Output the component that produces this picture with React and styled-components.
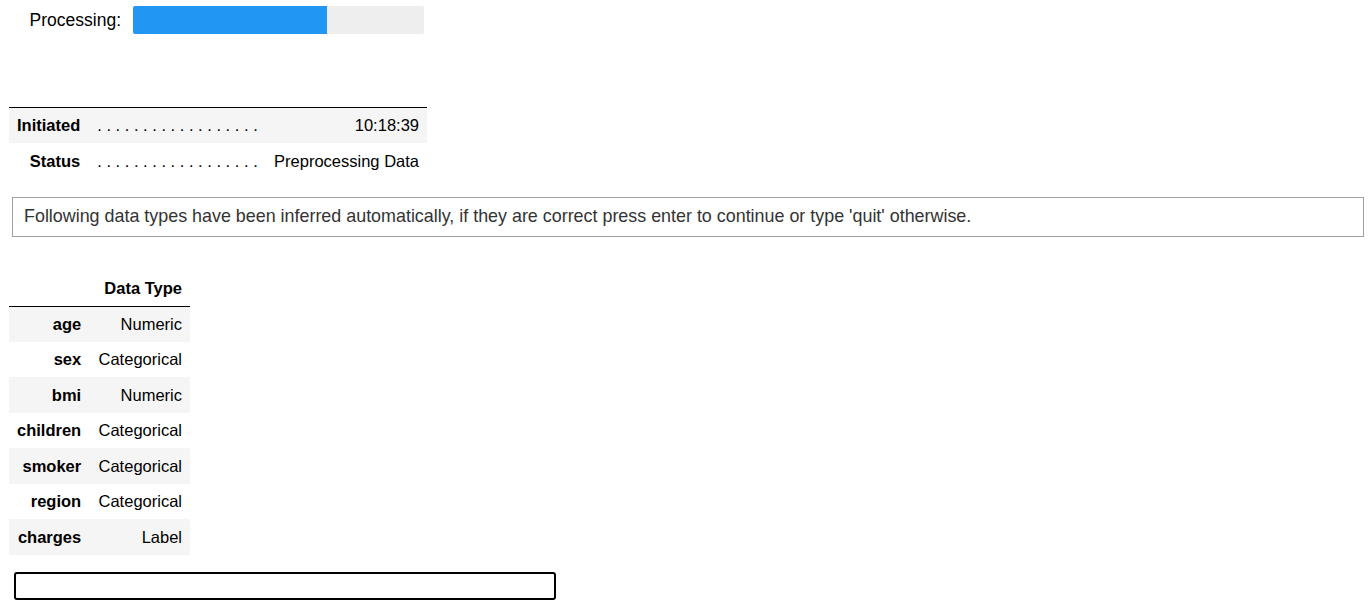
import React from 'react';
import styled, { createGlobalStyle } from 'styled-components';

const GlobalStyle = createGlobalStyle`
  body {
    margin: 0;
    background: #ffffff;
    font-family: 'Liberation Sans', Arial, sans-serif;
    color: #000000;
  }
`;

const timestamps = [
  { label: 'Initiated', value: '10:18:39' },
  { label: 'Status', value: 'Preprocessing Data' },
];

const dataTypes = [
  ['age', 'Numeric'],
  ['sex', 'Categorical'],
  ['bmi', 'Numeric'],
  ['children', 'Categorical'],
  ['smoker', 'Categorical'],
  ['region', 'Categorical'],
  ['charges', 'Label'],
];

const DOTS = '. . . . . . . . . . . . . . . . . .';

const App = () => (
  <Page>
    <GlobalStyle />
    <ProgressRow>
      <ProgressLabel>Processing:</ProgressLabel>
      <ProgressTrack>
        <ProgressFill style={{ width: `${(194 / 291) * 100}%` }} />
      </ProgressTrack>
    </ProgressRow>

    <InfoTable>
      <tbody>
        {timestamps.map((t) => (
          <tr key={t.label}>
            <th>{t.label}</th>
            <DotsCell>{DOTS}</DotsCell>
            <td>{t.value}</td>
          </tr>
        ))}
      </tbody>
    </InfoTable>

    <Message>
      Following data types have been inferred automatically, if they are correct press enter to continue or type 'quit' otherwise.
    </Message>

    <TypeTable>
      <thead>
        <tr>
          <th></th>
          <th>Data Type</th>
        </tr>
      </thead>
      <tbody>
        {dataTypes.map(([name, type]) => (
          <tr key={name}>
            <th>{name}</th>
            <td>{type}</td>
          </tr>
        ))}
      </tbody>
    </TypeTable>

    <Prompt type="text" />
  </Page>
);

const Page = styled.div`
  display: flex;
  flex-direction: column;
  align-items: flex-start;
  padding: 6px 0 0 9px;
  width: 1372px;
  box-sizing: border-box;
`;

const ProgressRow = styled.div`
  display: flex;
  align-items: center;
  height: 28px;
`;

const ProgressLabel = styled.div`
  width: 112px;
  margin-right: 12px;
  text-align: right;
  font-size: 17.5px;
  color: #000;
`;

const ProgressTrack = styled.div`
  width: 291px;
  height: 28px;
  background: #eeeeee;
  border-radius: 2px;
  overflow: hidden;
`;

const ProgressFill = styled.div`
  height: 100%;
  background: #2196f3;
`;

const BaseTable = styled.table`
  border-collapse: collapse;
  border-spacing: 0;
  font-size: 16.5px;

  th,
  td {
    height: 35.5px;
    padding: 0 8px;
    box-sizing: border-box;
    text-align: right;
    vertical-align: middle;
    white-space: nowrap;
    line-height: 1;
  }

  th {
    font-weight: bold;
  }

  tbody tr:nth-child(odd) {
    background: #f5f5f5;
  }
`;

const InfoTable = styled(BaseTable)`
  width: 418px;
  margin-top: 73px;
  border-top: 1px solid #000;

  th {
    width: 64px;
  }
`;

const DotsCell = styled.td`
  && {
    text-align: left;
    padding-left: 9px;
  }
`;

const Message = styled.div`
  width: 1352px;
  box-sizing: border-box;
  margin: 18px 0 0 3px;
  padding: 0 11px;
  height: 40px;
  display: flex;
  align-items: center;
  border: 1px solid #a0a0a0;
  font-size: 17.9px;
  color: #333333;
`;

const TypeTable = styled(BaseTable)`
  margin-top: 34px;
  width: 181px;

  thead th {
    border-bottom: 1px solid #000;
  }

  th:first-child {
    width: 64px;
  }
`;

const Prompt = styled.input`
  margin: 17px 0 0 5px;
  width: 542px;
  height: 28px;
  box-sizing: border-box;
  border: 2px solid #000;
  border-radius: 3px;
  outline: none;
  background: #fff;
`;

export default App;
